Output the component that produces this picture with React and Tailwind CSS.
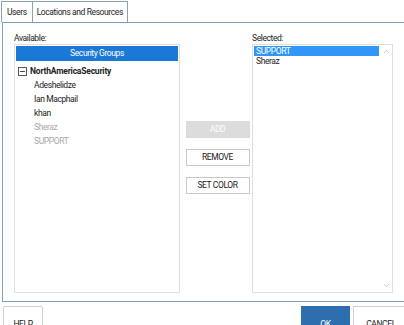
import { ChevronUp, ChevronDown, Minus } from 'lucide-react'

const available = [
  { name: 'Adeshelidze', muted: false },
  { name: 'Ian Macphail', muted: false },
  { name: 'khan', muted: false },
  { name: 'Sheraz', muted: true },
  { name: 'SUPPORT', muted: true },
]

const selected = ['SUPPORT', 'Sheraz']

function SideButton({ children, disabled }) {
  return (
    <button
      className={`h-[17px] w-[64px] text-[8.5px] tracking-[-0.4px] ${
        disabled
          ? 'bg-[#dcdcdc] text-white'
          : 'bg-white border border-[#c9c9c9] text-[#222]'
      }`}
    >
      {children}
    </button>
  )
}

export default function App() {
  return (
    <div className="w-[404px] h-[325px] bg-white overflow-hidden text-[#222] font-['Roboto',sans-serif] text-[8.5px] tracking-[-0.4px]">
      {/* tabs */}
      <div className="flex h-[22px] pl-[1px]">
        <div className="flex items-center px-[5px] border-l border-t border-r border-[#8aa2bd] mt-[1px]">Users</div>
        <div className="flex items-center px-[4px] border-t border-r border-[#8aa2bd] mt-[1px] bg-white">Locations and Resources</div>
      </div>

      {/* panel */}
      <div className="ml-[2px] h-[280px] border-t border-l border-b border-[#7e9cbb] flex pl-[11px] pt-[10px]">
        <div className="flex flex-col w-[166px]">
          <div className="h-[10px] leading-[10px]">Available:</div>
          <div className="mt-[1px] h-[249px] border border-[#dedede] p-[1px]">
            <div className="h-[15px] bg-[#1a78d6] text-white flex items-center justify-center">Security Groups</div>
            <div className="flex items-center gap-[3px] mt-[3px] pl-[2px] h-[14px]">
              <div className="w-[9px] h-[9px] border border-[#555] flex items-center justify-center">
                <Minus size={7} strokeWidth={3} />
              </div>
              <span className="font-bold text-[8.5px] tracking-[-0.2px]">NorthAmericaSecurity</span>
            </div>
            <div className="flex flex-col pl-[18px]">
              {available.map(a => (
                <div key={a.name} className={`h-[14px] leading-[14px] ${a.muted ? 'text-[#a8a8a8]' : ''}`}>{a.name}</div>
              ))}
            </div>
          </div>
        </div>

        <div className="flex flex-col items-center gap-[11px] w-[72px] pt-[88px] pl-[3px]">
          <SideButton disabled>ADD</SideButton>
          <SideButton>REMOVE</SideButton>
          <SideButton>SET COLOR</SideButton>
        </div>

        <div className="flex flex-col w-[141px]">
          <div className="h-[10px] leading-[10px]">Selected:</div>
          <div className="mt-[1px] h-[249px] border border-[#dedede] flex">
            <div className="flex-1 p-[1px]">
              {selected.map((s, i) => (
                <div key={s} className={`h-[10px] leading-[10px] pl-[2px] ${i === 0 ? 'bg-[#3296f7] text-white' : ''}`}>{s}</div>
              ))}
            </div>
            <div className="w-[12px] flex flex-col justify-between items-center py-[2px] text-[#b4b4b4]">
              <ChevronUp size={9} />
              <ChevronDown size={9} />
            </div>
          </div>
        </div>
      </div>

      {/* footer */}
      <div className="flex items-start pl-[3px] pt-[4px]">
        <button className="w-[40px] h-[28px] border border-[#d0d0d0] rounded-[2px] bg-white pt-[8px]">HELP</button>
        <div className="flex-1" />
        <button className="w-[49px] h-[28px] bg-[#2d6fae] text-white pt-[8px]">OK</button>
        <button className="ml-[3px] w-[56px] shrink-0 -mr-[5px] h-[28px] border border-[#d0d0d0] bg-white pt-[8px]">CANCEL</button>
      </div>
    </div>
  )
}
